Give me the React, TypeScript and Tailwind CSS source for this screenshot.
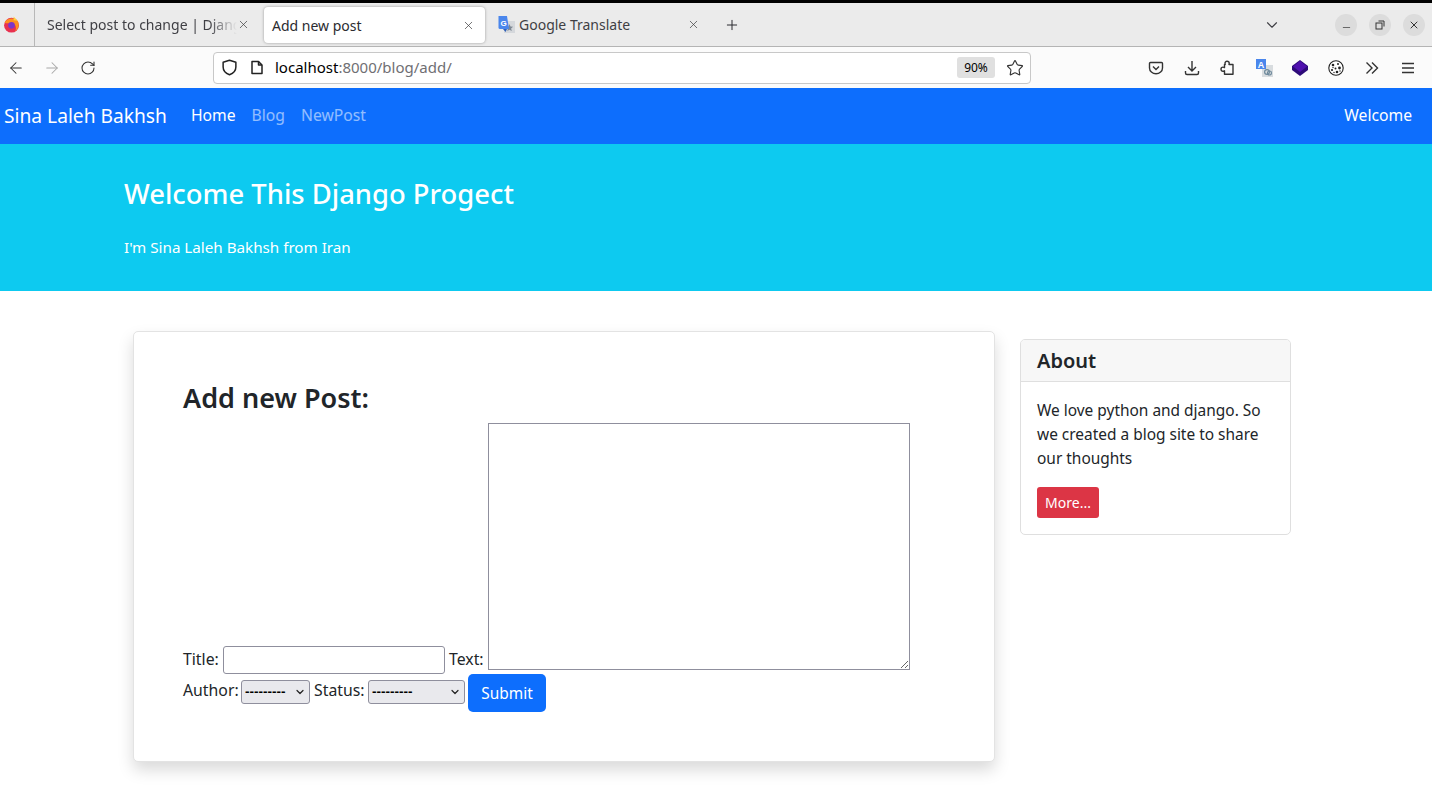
import React from "react";
import { ArrowLeft, ArrowRight, RotateCw, Star, X, Plus, ChevronDown, Minus } from "lucide-react";

const font = "font-['Noto_Sans','Liberation_Sans',sans-serif]";

function Firefox() {
  return (
    <svg width="17" height="17" viewBox="0 0 16 16">
      <circle cx="8" cy="8.6" r="7" fill="#e8304f" />
      <path d="M1.5 6 C4 1.500 11 1 14 5 C15.500 8 15 12 11.500 14.500 C13.500 10 11 6.500 8 6.500 C6 6.500 3.500 7.500 1.500 6Z" fill="#ff8f1f" />
      <circle cx="8" cy="8.8" r="3.100" fill="#7d35c9" />
      <path d="M10 0.500 C11 2 12.500 2.500 13.500 4.500 L10 4Z" fill="#ffcf3a" />
    </svg>
  );
}

function Translate16() {
  return (
    <svg width="18" height="18" viewBox="0 0 18 18">
      <rect x="7" y="5" width="11" height="12" fill="#d5d8dc" />
      <path d="M12.5 8 l1 2.6 2.6.2-2 1.7.7 2.6-2.3-1.4-2.3 1.4.7-2.6-2-1.7 2.6-.2z" fill="#7d8894" />
      <path d="M1.5 0h8.5l2 13H3a1.5 1.5 0 0 1-1.5-1.5z" fill="#4a86ec" />
      <path d="M6 13h4l-1.5 3z" fill="#2f5fb8" />
      <text x="3.4" y="9.5" fontSize="8" fontWeight="700" fill="#fff" fontFamily="Liberation Sans">G</text>
    </svg>
  );
}

function TabClose() {
  return <X size={13} strokeWidth={1.3} className="text-[#3a3a3c] shrink-0" />;
}

function WinBtn({ children }: { children: React.ReactNode }) {
  return <div className="w-[22px] h-[22px] rounded-full bg-[#dcdcdc] flex items-center justify-center text-[#333]">{children}</div>;
}

function ToolSlot({ children }: { children: React.ReactNode }) {
  return <div className="w-[36px] h-[20px] flex items-center justify-center text-[#333]">{children}</div>;
}

function FakeSelect({ w }: { w: string }) {
  return (
    <span className={`relative inline-block h-[24px] ${w}`}>
      <select className={`appearance-none h-[24px] w-full rounded-[3px] border border-[#8f8f9d] bg-[#e9e9ed] pl-[3px] text-[13.5px] font-bold text-black font-['Liberation_Sans',sans-serif]`}>
        <option>---------</option>
      </select>
      <ChevronDown size={12} strokeWidth={2.4} className="absolute right-[4px] top-[7px] text-[#222] pointer-events-none" />
    </span>
  );
}

export default function App() {
  return (
    <div className={`w-[1432px] h-[795px] overflow-hidden bg-white text-[#212529] text-[15.45px] ${font}`}>
      {/* tab strip */}
      <div className="h-[47px] bg-[#ebebeb] border-t-[3px] border-black border-b border-b-[#b4b4b4] flex items-stretch text-[14px] text-[#3f3f44]">
        <div className="w-[35px] border-r border-[#b8b8b8] flex items-center pl-[3px] shrink-0"><Firefox /></div>
        <div className="w-[217px] pl-[12px] pr-[1px] flex items-center shrink-0">
          <span className="w-[190px] overflow-hidden whitespace-nowrap [mask-image:linear-gradient(to_right,black_85%,transparent)]">Select post to change | Django</span>
          <TabClose />
        </div>
        <div className="mt-[4px] h-[36px] w-[221px] ml-[12px] bg-white rounded-[4px] shadow-[0_0_3px_rgba(0,0,0,0.35)] flex items-center justify-between pl-[8px] pr-[10px] shrink-0 text-[#2b2b30]">
          <span>Add new post</span>
          <TabClose />
        </div>
        <div className="w-[208px] ml-[12px] flex items-center shrink-0">
          <Translate16 />
          <span className="ml-[4px] w-[168px]">Google Translate</span>
          <TabClose />
        </div>
        <div className="ml-[19px] flex items-center text-[#2b2b30]"><Plus size={16} strokeWidth={1.5} /></div>
        <div className="ml-auto mr-[7px] flex items-center gap-[12px]">
          <ChevronDown size={18} strokeWidth={1.5} className="mr-[42px]" />
          <WinBtn><Minus size={11} strokeWidth={1.5} className="mt-[5px]" /></WinBtn>
          <WinBtn>
            <svg width="10" height="10" viewBox="0 0 10 10" fill="none" stroke="#333" strokeWidth="1"><rect x="1" y="3" width="6" height="6" /><path d="M3.5 1H9v5.5" /></svg>
          </WinBtn>
          <WinBtn><X size={12} strokeWidth={2} /></WinBtn>
        </div>
      </div>

      {/* toolbar */}
      <div className="h-[41px] bg-[#fbfbfb] flex items-center text-[#333]">
        <div className="w-[213px] pl-[7px] flex items-center gap-[18px] shrink-0">
          <ArrowLeft size={18} strokeWidth={1.4} />
          <ArrowRight size={18} strokeWidth={1.4} className="text-[#a8a8a8]" />
          <RotateCw size={16} strokeWidth={1.6} className="ml-[1px]" />
        </div>
        <div className="w-[818px] h-[32px] bg-white border border-[#c8c8c8] rounded-[4px] flex items-center shrink-0 pl-[7px]">
          <svg width="17" height="17" viewBox="0 0 16 16" fill="none" stroke="#222" strokeWidth="1.4" strokeLinejoin="round"><path d="M8 1.200 L14 3 V7.500 C14 11 11.500 13.500 8 14.800 C4.500 13.500 2 11 2 7.500 V3Z" /></svg>
          <svg width="14" height="15" viewBox="0 0 14 15" fill="none" stroke="#222" strokeWidth="1.500" strokeLinejoin="round" className="ml-[12px]"><path d="M2 1.500 H8.500 L12 5 V13.500 H2Z" /><path d="M8.500 1.500 V5 H12" /></svg>
          <span className="ml-[11px] text-[15px] text-black">localhost<span className="text-[#6f6f73]">:8000/blog/add/</span></span>
          <span className="ml-auto h-[21px] w-[38px] rounded-[3px] bg-[#e0e0e0] text-[12px] text-black flex items-center justify-center">90%</span>
          <Star size={18} strokeWidth={1.5} className="ml-[11px] mr-[6px]" />
        </div>
        <div className="ml-auto mr-[6px] flex items-center">
          <ToolSlot>
            <svg width="16" height="16" viewBox="0 0 16 16" fill="none" stroke="#333" strokeWidth="1.4"><path d="M2.5 2.5h11a1 1 0 0 1 1 1V8a6.5 5.8 0 0 1-13 0V3.500a1 1 0 0 1 1-1z" /><path d="M5 6.500l3 3 3-3" /></svg>
          </ToolSlot>
          <ToolSlot>
            <svg width="16" height="16" viewBox="0 0 16 16" fill="none" stroke="#333" strokeWidth="1.400"><path d="M8 1v9.500M4 7l4 4 4-4" /><path d="M1.500 11v2a1.500 1.500 0 0 0 1.500 1.500h10a1.500 1.500 0 0 0 1.500-1.500v-2" /></svg>
          </ToolSlot>
          <ToolSlot>
            <svg width="16" height="16" viewBox="0 0 16 16" fill="none" stroke="#333" strokeWidth="1.400" strokeLinejoin="round"><path d="M7 1.200c1.500 0 2.200 1 2.200 2.100 0 .5-.2.800-.2 1.200h4v9.800H4.500v-3.500c-.5.300-1 .5-1.500.5-1.200 0-2-.9-2-2.100s.8-2.100 2-2.100c.5 0 1 .2 1.500.5V4.500h.7c0-.4-.2-.7-.2-1.200 0-1.100.7-2.100 2-2.100z" /></svg>
          </ToolSlot>
          <ToolSlot>
            <svg width="17" height="18" viewBox="0 0 17 18">
              <rect x="6" y="6" width="11" height="12" fill="#d8dcdf" />
              <rect x="0" y="0" width="10" height="10" fill="#4a86ec" />
              <text x="1.8" y="8.500" fontSize="9" fontWeight="700" fill="#fff" fontFamily="Liberation Sans">A</text>
              <circle cx="11" cy="13" r="2.400" fill="none" stroke="#6f8a9c" strokeWidth="1.200" />
              <circle cx="13.500" cy="14" r="2" fill="none" stroke="#6f8a9c" strokeWidth="1.200" />
            </svg>
          </ToolSlot>
          <ToolSlot>
            <svg width="16" height="16" viewBox="0 0 16 16"><path d="M8 0l8 6v4l-8 6-8-6V6z" fill="#2c0a78" /><path d="M8 1l7 5.500L8 12 1 6.500z" fill="#4f10ae" /></svg>
          </ToolSlot>
          <ToolSlot>
            <svg width="16" height="16" viewBox="0 0 16 16">
              <circle cx="8" cy="8" r="7.200" fill="#fff" stroke="#222" strokeWidth="1.100" />
              <circle cx="5" cy="5" r="1.300" fill="#222" /><circle cx="10" cy="4" r="1" fill="#222" /><circle cx="11.500" cy="8" r="1.400" fill="#222" />
              <circle cx="7.500" cy="8.500" r="1" fill="#222" /><circle cx="4" cy="10" r="1.100" fill="#222" /><circle cx="9" cy="12" r="1.300" fill="#222" />
              <circle cx="5" cy="7.500" r=".7" fill="#222" /><circle cx="12" cy="11" r=".7" fill="#222" /><circle cx="6" cy="12.500" r=".7" fill="#222" />
            </svg>
          </ToolSlot>
          <ToolSlot>
            <svg width="14" height="14" viewBox="0 0 14 14" fill="none" stroke="#333" strokeWidth="1.400"><path d="M1.500 1.500 7 7l-5.500 5.500M7 1.500 12.500 7 7 12.500" /></svg>
          </ToolSlot>
          <ToolSlot>
            <svg width="14" height="12" viewBox="0 0 14 12" fill="none" stroke="#333" strokeWidth="1.300"><path d="M1 1.500h12M1 6h12M1 10.500h12" /></svg>
          </ToolSlot>
        </div>
      </div>

      {/* navbar */}
      <nav className="h-[56px] bg-[#0d6efd] flex items-center pl-[4px] pr-[20px] text-white">
        <span className="text-[19.2px] mr-[24px]">Sina Laleh Bakhsh</span>
        <div className="flex gap-[16px] text-[15.7px]">
          <span>Home</span>
          <span className="text-white/55">Blog</span>
          <span className="text-white/55">NewPost</span>
        </div>
        <span className="ml-auto text-[15.7px]">Welcome</span>
      </nav>

      {/* hero */}
      <header className="h-[147px] bg-[#0dcaf0] pl-[124px] pt-[32px] text-white">
        <h1 className="text-[27.4px] leading-[36px] font-medium">Welcome This Django Progect</h1>
        <p className="mt-[23px] leading-[24px] text-[15.2px]">I'm Sina Laleh Bakhsh from Iran</p>
      </header>

      {/* content */}
      <main className="flex items-start pl-[133px] pt-[40px]">
        <section className="w-[862px] h-[431px] bg-white border border-[#e3e3e3] rounded-[5px] shadow-[0_8px_16px_rgba(0,0,0,0.15)] pl-[49px] pt-[49px] shrink-0">
          <h2 className="text-[27px] leading-[34px] font-semibold">Add new Post:</h2>
          <div className="mt-[8px] flex items-end text-[15.8px]">
            <span className="mb-[2px] mr-[3px] w-[37px]">Title:</span>
            <input className="w-[222px] h-[28px] bg-white border border-[#8f8f9d] rounded-[3px]" />
            <span className="ml-[4px] mr-[3px] mb-[2px] w-[36px]">Text:</span>
            <textarea className="w-[422px] h-[247px] mb-[4px] bg-white border border-[#8f8f9d] resize-y" />
          </div>
          <div className="flex items-center text-[15.8px]">
            <span className="mr-[3px] mb-[4px] w-[55px]">Author:</span>
            <span className="mb-[4px] flex"><FakeSelect w="w-[69px]" /></span>
            <span className="ml-[4px] mr-[3px] mb-[4px] w-[51px]">Status:</span>
            <span className="mb-[4px] flex"><FakeSelect w="w-[97px]" /></span>
            <button className="ml-[3px] w-[78px] h-[38px] pt-[1px] rounded-[5px] bg-[#0d6efd] text-white text-[15.45px]">Submit</button>
          </div>
        </section>

        <aside className="ml-[25px] mt-[8px] w-[271px] h-[196px] border border-[#dfdfdf] rounded-[5px] overflow-hidden shrink-0">
          <div className="h-[42px] bg-[#f7f7f7] border-b border-[#dfdfdf] pl-[16px] flex items-center text-[20px] font-semibold">About</div>
          <div className="pl-[16px] pr-[10px] pt-[16px]">
            <p className="leading-[24px]">We love python and django. So we created a blog site to share our thoughts</p>
            <button className="mt-[17px] block w-[62px] h-[31px] rounded-[3px] bg-[#dc3545] text-white text-[14px]">More...</button>
          </div>
        </aside>
      </main>
    </div>
  );
}
